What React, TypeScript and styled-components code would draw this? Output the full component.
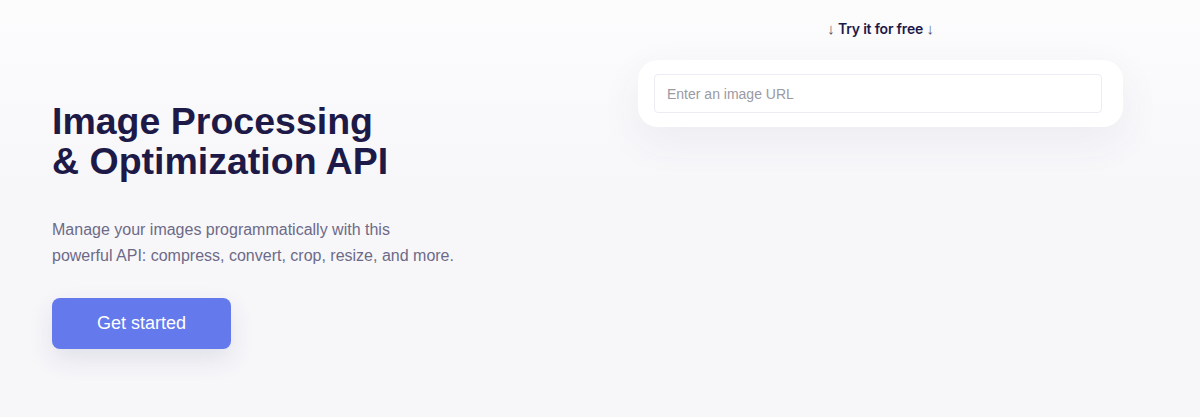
import React, { useState } from "react";
import styled, { createGlobalStyle } from "styled-components";

const GlobalStyle = createGlobalStyle`
  html, body {
    margin: 0;
    padding: 0;
  }
  body {
    font-family: "Liberation Sans", Arial, sans-serif;
    background: #f8f8fb;
  }
`;

const Hero = styled.section`
  display: flex;
  align-items: flex-start;
  height: 417px;
  box-sizing: border-box;
  padding: 0 77px 0 52px;
  background: linear-gradient(180deg, #fcfcfd 0%, #f7f7fa 45%, #f7f7fa 100%);
  overflow: hidden;
`;

const Intro = styled.div`
  flex: 1;
  padding-top: 101px;
`;

const Title = styled.h1`
  margin: 0;
  font-size: 37.5px;
  line-height: 40px;
  font-weight: 700;
  color: #1e1a48;
`;

const Lead = styled.p`
  margin: 36px 0 0;
  font-size: 16px;
  line-height: 26px;
  color: #6d6a88;
`;

const CtaButton = styled.button`
  margin-top: 29px;
  width: 179px;
  height: 51px;
  border: none;
  border-radius: 8px;
  background: #6479ec;
  color: #fff;
  font-family: "Liberation Sans", Arial, sans-serif;
  font-size: 18px;
  cursor: pointer;
  box-shadow: 0 10px 24px rgba(60, 60, 110, 0.12);
`;

const Demo = styled.div`
  width: 485px;
  padding-top: 19px;
  display: flex;
  flex-direction: column;
  align-items: center;
`;

const DemoLabel = styled.div`
  font-family: Inter, "Noto Sans", sans-serif;
  font-size: 14px;
  font-weight: 600;
  line-height: 20px;
  letter-spacing: -0.2px;
  color: #1e1a48;
  margin-bottom: 21px;
`;

const Arrow = styled.span`
  font-family: "Liberation Sans", Arial, sans-serif;
  font-weight: 400;
  font-size: 15px;
  color: #55536e;
`;

const Card = styled.div`
  align-self: stretch;
  background: #fff;
  border-radius: 20px;
  padding: 14px 21px 14px 16px;
  box-shadow: 0 14px 40px rgba(70, 70, 120, 0.07);
`;

const UrlInput = styled.input`
  display: block;
  width: 100%;
  height: 39px;
  box-sizing: border-box;
  border: 1px solid #ececf4;
  border-radius: 4px;
  padding: 0 12px;
  font-family: "Liberation Sans", Arial, sans-serif;
  font-size: 14px;
  color: #333;
  outline: none;

  &::placeholder {
    color: #9a9aa3;
  }
`;

const App: React.FC = () => {
  const [url, setUrl] = useState("");

  return (
    <>
      <GlobalStyle />
      <Hero>
        <Intro>
          <Title>
            Image Processing
            <br />& Optimization API
          </Title>
          <Lead>
            Manage your images programmatically with this
            <br />
            powerful API: compress, convert, crop, resize, and more.
          </Lead>
          <CtaButton>Get started</CtaButton>
        </Intro>
        <Demo>
          <DemoLabel>
            <Arrow>↓</Arrow> Try it for free <Arrow>↓</Arrow>
          </DemoLabel>
          <Card>
            <UrlInput
              placeholder="Enter an image URL"
              value={url}
              onChange={(e) => setUrl(e.target.value)}
            />
          </Card>
        </Demo>
      </Hero>
    </>
  );
};

export default App;
